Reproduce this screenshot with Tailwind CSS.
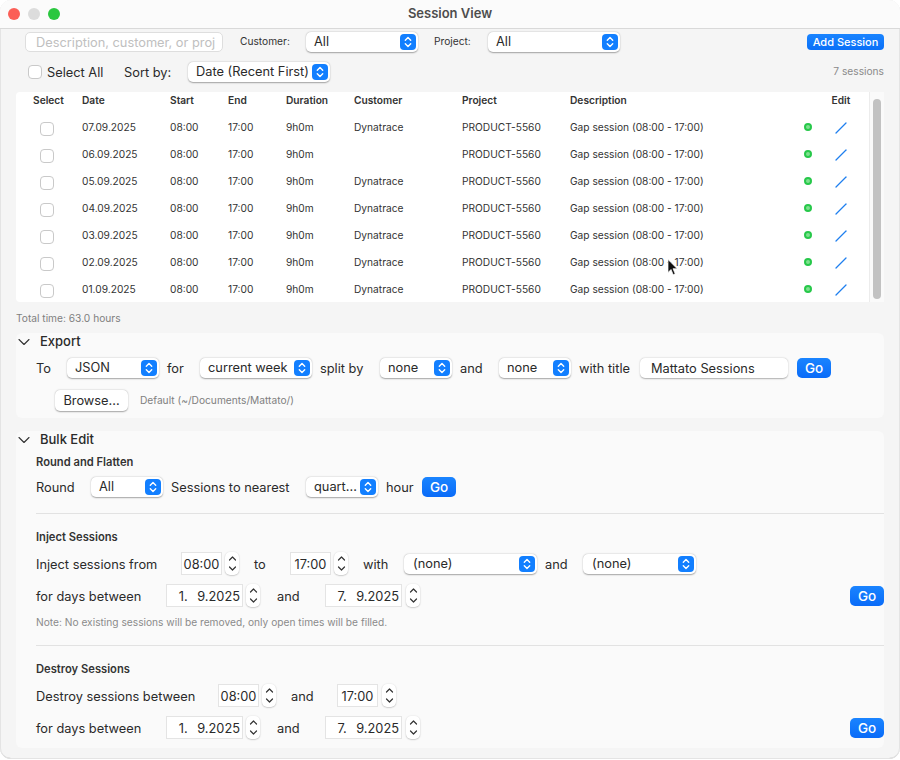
<!DOCTYPE html>
<html lang="en">
  <head>
    <meta charset="UTF-8" />
    <title>Session View</title>
    <script src="https://cdn.jsdelivr.net/npm/@tailwindcss/browser@4"></script>
  </head>
  <body class="bg-white font-['Inter',sans-serif] text-[12.8px] text-[#2a2a2a]">
    <div class="relative w-[900px] h-[759px] overflow-hidden rounded-[11px] border-b border-[#cfcfcf] bg-[#f5f5f5] outline outline-[#e4e4e4] -outline-offset-1">
      <!-- Title bar -->
      <header class="relative flex h-[29px] items-center justify-center border-b border-[#d9d9d9] bg-[#fbfbfb]">
        <div class="absolute left-[8px] top-[8px] flex gap-[8px]">
          <span class="size-3 rounded-full bg-[#fb5f57]"></span>
          <span class="size-3 rounded-full bg-[#dcdcdc]"></span>
          <span class="size-3 rounded-full bg-[#2ac73f]"></span>
        </div>
        <h1 class="text-[13px] font-semibold text-[#4d4d4d]">Session View</h1>
      </header>

      <!-- Filters -->
      <div class="flex h-[20px] mt-[3px] items-center pl-[25px] pr-[16px]">
        <div class="w-[198px] h-[20px] rounded-[5px] border border-[#dedede] bg-white pl-[10px] leading-[19px] text-[#c0c0c0] overflow-hidden whitespace-nowrap">Description, customer, or proj</div>
        <span class="ml-[17px] w-[66px] text-[10.2px] text-[#333]">Customer:</span>
        <div class="w-[112px] h-[20px] rounded-[5px] bg-white shadow-[0_0.5px_1.5px_rgba(0,0,0,0.35)] flex items-center justify-between pl-[8px] pr-[2px]"><span>All</span>
          <span class="size-4 rounded-[4px] bg-[#127fff] flex items-center justify-center"><svg class="w-[10px] h-[14px]" viewBox="0 0 10 14" fill="none" stroke="white" stroke-width="1.4" stroke-linecap="round" stroke-linejoin="round"><path d="M2.3 5.3 5 2.6l2.7 2.7M2.3 8.7 5 11.4l2.7-2.7"/></svg></span>
        </div>
        <span class="ml-[16px] w-[54px] text-[10.2px] text-[#333]">Project:</span>
        <div class="w-[132px] h-[20px] rounded-[5px] bg-white shadow-[0_0.5px_1.5px_rgba(0,0,0,0.35)] flex items-center justify-between pl-[8px] pr-[2px]"><span>All</span>
          <span class="size-4 rounded-[4px] bg-[#127fff] flex items-center justify-center"><svg class="w-[10px] h-[14px]" viewBox="0 0 10 14" fill="none" stroke="white" stroke-width="1.4" stroke-linecap="round" stroke-linejoin="round"><path d="M2.3 5.3 5 2.6l2.7 2.7M2.3 8.7 5 11.4l2.7-2.7"/></svg></span>
        </div>
        <button class="ml-auto w-[77px] h-[16px] rounded-[4px] bg-linear-to-b from-[#1a84ff] to-[#0a70f8] text-[11px] font-medium leading-[16px] text-white">Add Session</button>
      </div>

      <div class="flex h-[20px] mt-[10px] items-center pl-[28px] pr-[16px]">
        <span class="size-[14px] rounded-[4px] border border-[#c9c9c9] bg-white"></span>
        <span class="ml-[5px] w-[77px] pt-[2px]">Select All</span>
        <span class="w-[64px] pt-[2px]">Sort by:</span>
        <div class="w-[142px] h-[20px] rounded-[5px] bg-white shadow-[0_0.5px_1.5px_rgba(0,0,0,0.35)] flex items-center justify-between pl-[8px] pr-[2px]"><span class="whitespace-nowrap">Date (Recent First)</span>
          <span class="size-4 rounded-[4px] bg-[#127fff] flex items-center justify-center"><svg class="w-[10px] h-[14px]" viewBox="0 0 10 14" fill="none" stroke="white" stroke-width="1.4" stroke-linecap="round" stroke-linejoin="round"><path d="M2.3 5.3 5 2.6l2.7 2.7M2.3 8.7 5 11.4l2.7-2.7"/></svg></span>
        </div>
        <span class="ml-auto text-[10.2px] text-[#8a8a8a]">7 sessions</span>
      </div>

      <!-- Table -->
      <div class="mx-[16px] mt-[10px] flex h-[210px] rounded-[4px] bg-white text-[10.2px] text-[#333]">
        <div class="w-[853px]">
          <div class="grid h-[17px] grid-cols-[66px_88px_58px_58px_68px_108px_108px_232px_22px_34px] items-center font-semibold">
            <span class="pl-[17px]">Select</span><span>Date</span><span>Start</span><span>End</span><span>Duration</span><span>Customer</span><span>Project</span><span>Description</span><span></span><span class="text-center">Edit</span>
          </div>
          <div class="mt-[5px] grid h-[27px] grid-cols-[66px_88px_58px_58px_68px_108px_108px_232px_22px_34px] items-center">
            <span class="ml-[24px] mt-[2px] size-[14px] rounded-[4px] border border-[#c9c9c9] bg-white"></span><span>07.09.2025</span><span>08:00</span><span>17:00</span><span>9h0m</span><span>Dynatrace</span><span>PRODUCT-5560</span><span>Gap session (08:00 - 17:00)</span><span class="ml-[2px] mb-[1px] size-2 rounded-full border-[2px] border-[#27c84a] bg-[#7fe08f]"></span>
            <svg class="mx-auto size-3" viewBox="0 0 12 12" fill="none" stroke="#1f7fef" stroke-width="1.3" stroke-linecap="round"><path d="M1 11 11 1"/></svg>
          </div>
          <div class="grid h-[27px] grid-cols-[66px_88px_58px_58px_68px_108px_108px_232px_22px_34px] items-center">
            <span class="ml-[24px] mt-[2px] size-[14px] rounded-[4px] border border-[#c9c9c9] bg-white"></span><span>06.09.2025</span><span>08:00</span><span>17:00</span><span>9h0m</span><span></span><span>PRODUCT-5560</span><span>Gap session (08:00 - 17:00)</span><span class="ml-[2px] mb-[1px] size-2 rounded-full border-[2px] border-[#27c84a] bg-[#7fe08f]"></span>
            <svg class="mx-auto size-3" viewBox="0 0 12 12" fill="none" stroke="#1f7fef" stroke-width="1.3" stroke-linecap="round"><path d="M1 11 11 1"/></svg>
          </div>
          <div class="grid h-[27px] grid-cols-[66px_88px_58px_58px_68px_108px_108px_232px_22px_34px] items-center">
            <span class="ml-[24px] mt-[2px] size-[14px] rounded-[4px] border border-[#c9c9c9] bg-white"></span><span>05.09.2025</span><span>08:00</span><span>17:00</span><span>9h0m</span><span>Dynatrace</span><span>PRODUCT-5560</span><span>Gap session (08:00 - 17:00)</span><span class="ml-[2px] mb-[1px] size-2 rounded-full border-[2px] border-[#27c84a] bg-[#7fe08f]"></span>
            <svg class="mx-auto size-3" viewBox="0 0 12 12" fill="none" stroke="#1f7fef" stroke-width="1.3" stroke-linecap="round"><path d="M1 11 11 1"/></svg>
          </div>
          <div class="grid h-[27px] grid-cols-[66px_88px_58px_58px_68px_108px_108px_232px_22px_34px] items-center">
            <span class="ml-[24px] mt-[2px] size-[14px] rounded-[4px] border border-[#c9c9c9] bg-white"></span><span>04.09.2025</span><span>08:00</span><span>17:00</span><span>9h0m</span><span>Dynatrace</span><span>PRODUCT-5560</span><span>Gap session (08:00 - 17:00)</span><span class="ml-[2px] mb-[1px] size-2 rounded-full border-[2px] border-[#27c84a] bg-[#7fe08f]"></span>
            <svg class="mx-auto size-3" viewBox="0 0 12 12" fill="none" stroke="#1f7fef" stroke-width="1.3" stroke-linecap="round"><path d="M1 11 11 1"/></svg>
          </div>
          <div class="grid h-[27px] grid-cols-[66px_88px_58px_58px_68px_108px_108px_232px_22px_34px] items-center">
            <span class="ml-[24px] mt-[2px] size-[14px] rounded-[4px] border border-[#c9c9c9] bg-white"></span><span>03.09.2025</span><span>08:00</span><span>17:00</span><span>9h0m</span><span>Dynatrace</span><span>PRODUCT-5560</span><span>Gap session (08:00 - 17:00)</span><span class="ml-[2px] mb-[1px] size-2 rounded-full border-[2px] border-[#27c84a] bg-[#7fe08f]"></span>
            <svg class="mx-auto size-3" viewBox="0 0 12 12" fill="none" stroke="#1f7fef" stroke-width="1.3" stroke-linecap="round"><path d="M1 11 11 1"/></svg>
          </div>
          <div class="grid h-[27px] grid-cols-[66px_88px_58px_58px_68px_108px_108px_232px_22px_34px] items-center">
            <span class="ml-[24px] mt-[2px] size-[14px] rounded-[4px] border border-[#c9c9c9] bg-white"></span><span>02.09.2025</span><span>08:00</span><span>17:00</span><span>9h0m</span><span>Dynatrace</span><span>PRODUCT-5560</span><span>Gap session (08:00 - 17:00)</span><span class="ml-[2px] mb-[1px] size-2 rounded-full border-[2px] border-[#27c84a] bg-[#7fe08f]"></span>
            <svg class="mx-auto size-3" viewBox="0 0 12 12" fill="none" stroke="#1f7fef" stroke-width="1.3" stroke-linecap="round"><path d="M1 11 11 1"/></svg>
          </div>
          <div class="grid h-[27px] grid-cols-[66px_88px_58px_58px_68px_108px_108px_232px_22px_34px] items-center">
            <span class="ml-[24px] mt-[2px] size-[14px] rounded-[4px] border border-[#c9c9c9] bg-white"></span><span>01.09.2025</span><span>08:00</span><span>17:00</span><span>9h0m</span><span>Dynatrace</span><span>PRODUCT-5560</span><span>Gap session (08:00 - 17:00)</span><span class="ml-[2px] mb-[1px] size-2 rounded-full border-[2px] border-[#27c84a] bg-[#7fe08f]"></span>
            <svg class="mx-auto size-3" viewBox="0 0 12 12" fill="none" stroke="#1f7fef" stroke-width="1.3" stroke-linecap="round"><path d="M1 11 11 1"/></svg>
          </div>
        </div>
        <div class="w-[15px] border-l border-[#ececec] bg-[#fafafa] pl-[3px] pt-[7px]">
          <div class="h-[200px] w-[8px] rounded-full bg-[#c2c2c2]"></div>
        </div>
      </div>

      <p class="ml-[16px] mt-[10px] h-[12px] text-[10.2px] leading-[12px] text-[#808080]">Total time: 63.0 hours</p>

      <!-- Export -->
      <section class="mx-[16px] mt-[9px] h-[85px] rounded-[6px] bg-[#fafafa]">
        <div class="flex h-[17px] items-center pt-[1px]">
          <svg class="ml-[2px] w-[12px] h-[8px]" viewBox="0 0 12 8" fill="none" stroke="#333" stroke-width="1.1" stroke-linecap="round" stroke-linejoin="round"><path d="M1 1.5 6 6.5l5-5"/></svg>
          <span class="ml-[10px] text-[13px] font-medium">Export</span>
        </div>
        <div class="mt-[8px] flex h-[20px] items-center pl-[20px]">
          <span class="w-[31px] pt-[2px]">To</span>
          <div class="w-[92px] h-[20px] rounded-[5px] bg-white shadow-[0_0.5px_1.5px_rgba(0,0,0,0.35)] flex items-center justify-between pl-[8px] pr-[2px]"><span>JSON</span>
            <span class="size-4 rounded-[4px] bg-[#127fff] flex items-center justify-center"><svg class="w-[10px] h-[14px]" viewBox="0 0 10 14" fill="none" stroke="white" stroke-width="1.4" stroke-linecap="round" stroke-linejoin="round"><path d="M2.3 5.3 5 2.6l2.7 2.7M2.3 8.7 5 11.4l2.7-2.7"/></svg></span>
          </div>
          <span class="ml-[8px] w-[33px] pt-[2px]">for</span>
          <div class="w-[112px] h-[20px] rounded-[5px] bg-white shadow-[0_0.5px_1.5px_rgba(0,0,0,0.35)] flex items-center justify-between pl-[8px] pr-[2px]"><span class="whitespace-nowrap">current week</span>
            <span class="size-4 rounded-[4px] bg-[#127fff] flex items-center justify-center"><svg class="w-[10px] h-[14px]" viewBox="0 0 10 14" fill="none" stroke="white" stroke-width="1.4" stroke-linecap="round" stroke-linejoin="round"><path d="M2.3 5.3 5 2.6l2.7 2.7M2.3 8.7 5 11.4l2.7-2.7"/></svg></span>
          </div>
          <span class="ml-[8px] w-[60px] pt-[2px] whitespace-nowrap">split by</span>
          <div class="w-[72px] h-[20px] rounded-[5px] bg-white shadow-[0_0.5px_1.5px_rgba(0,0,0,0.35)] flex items-center justify-between pl-[8px] pr-[2px]"><span>none</span>
            <span class="size-4 rounded-[4px] bg-[#127fff] flex items-center justify-center"><svg class="w-[10px] h-[14px]" viewBox="0 0 10 14" fill="none" stroke="white" stroke-width="1.4" stroke-linecap="round" stroke-linejoin="round"><path d="M2.3 5.3 5 2.6l2.7 2.7M2.3 8.7 5 11.4l2.7-2.7"/></svg></span>
          </div>
          <span class="ml-[8px] w-[39px] pt-[2px]">and</span>
          <div class="w-[72px] h-[20px] rounded-[5px] bg-white shadow-[0_0.5px_1.5px_rgba(0,0,0,0.35)] flex items-center justify-between pl-[8px] pr-[2px]"><span>none</span>
            <span class="size-4 rounded-[4px] bg-[#127fff] flex items-center justify-center"><svg class="w-[10px] h-[14px]" viewBox="0 0 10 14" fill="none" stroke="white" stroke-width="1.4" stroke-linecap="round" stroke-linejoin="round"><path d="M2.3 5.3 5 2.6l2.7 2.7M2.3 8.7 5 11.4l2.7-2.7"/></svg></span>
          </div>
          <span class="ml-[8px] w-[61px] pt-[2px] whitespace-nowrap">with title</span>
          <div class="w-[148px] h-[20px] rounded-[5px] bg-white shadow-[0_0.5px_1.5px_rgba(0,0,0,0.3)] pl-[11px] leading-[21px]">Mattato Sessions</div>
          <button class="ml-[9px] w-[34px] h-[20px] rounded-[5px] bg-linear-to-b from-[#1a84ff] to-[#0a6bf8] text-[13.5px] font-medium text-white">Go</button>
        </div>
        <div class="mt-[12px] flex h-[21px] items-center pl-[39px]">
          <button class="h-[21px] w-[73px] rounded-[5px] bg-white shadow-[0_0.5px_1.5px_rgba(0,0,0,0.35)]">Browse...</button>
          <span class="ml-[12px] text-[10.2px] text-[#808080]">Default (~/Documents/Mattato/)</span>
        </div>
      </section>

      <!-- Bulk Edit -->
      <section class="mx-[16px] mt-[13px] h-[317px] rounded-[6px] bg-[#fafafa]">
        <div class="flex h-[17px] items-center pt-[1px]">
          <svg class="ml-[2px] w-[12px] h-[8px]" viewBox="0 0 12 8" fill="none" stroke="#333" stroke-width="1.1" stroke-linecap="round" stroke-linejoin="round"><path d="M1 1.5 6 6.5l5-5"/></svg>
          <span class="ml-[10px] text-[13px] font-medium">Bulk Edit</span>
        </div>

        <div class="pl-[20px]">
          <h2 class="mt-[8px] h-[12px] text-[11.2px] font-semibold leading-[12px] text-[#333]">Round and Flatten</h2>
          <div class="mt-[9px] flex h-[20px] items-center">
            <span class="w-[55px] pt-[2px]">Round</span>
            <div class="w-[72px] h-[20px] rounded-[5px] bg-white shadow-[0_0.5px_1.5px_rgba(0,0,0,0.35)] flex items-center justify-between pl-[8px] pr-[2px]"><span>All</span>
              <span class="size-4 rounded-[4px] bg-[#127fff] flex items-center justify-center"><svg class="w-[10px] h-[14px]" viewBox="0 0 10 14" fill="none" stroke="white" stroke-width="1.4" stroke-linecap="round" stroke-linejoin="round"><path d="M2.3 5.3 5 2.6l2.7 2.7M2.3 8.7 5 11.4l2.7-2.7"/></svg></span>
            </div>
            <span class="ml-[8px] w-[135px] pt-[2px] whitespace-nowrap">Sessions to nearest</span>
            <div class="w-[72px] h-[20px] rounded-[5px] bg-white shadow-[0_0.5px_1.5px_rgba(0,0,0,0.35)] flex items-center justify-between pl-[8px] pr-[2px]"><span>quart...</span>
              <span class="size-4 rounded-[4px] bg-[#127fff] flex items-center justify-center"><svg class="w-[10px] h-[14px]" viewBox="0 0 10 14" fill="none" stroke="white" stroke-width="1.4" stroke-linecap="round" stroke-linejoin="round"><path d="M2.3 5.3 5 2.6l2.7 2.7M2.3 8.7 5 11.4l2.7-2.7"/></svg></span>
            </div>
            <span class="ml-[8px] w-[36px] pt-[2px]">hour</span>
            <button class="w-[34px] h-[20px] rounded-[5px] bg-linear-to-b from-[#1a84ff] to-[#0a6bf8] text-[13.5px] font-medium text-white">Go</button>
          </div>
          <hr class="mt-[16px] border-[#e2e2e2]" />

          <h2 class="mt-[17px] h-[12px] text-[11.2px] font-semibold leading-[12px] text-[#333]">Inject Sessions</h2>
          <div class="mt-[9px] flex h-[23px] items-center">
            <span class="w-[145px] pt-[2px] whitespace-nowrap">Inject sessions from</span>
            <div class="w-[41px] h-[23px] bg-white border border-[#e4e4e4] text-center leading-[23px]">08:00</div>
            <div class="ml-[3px] w-[14px] h-[23px] rounded-[5px] bg-white shadow-[0_0.5px_1.5px_rgba(0,0,0,0.3)] flex items-center justify-center"><svg class="w-[9px] h-[17px]" viewBox="0 0 9 17" fill="none" stroke="#333" stroke-width="1.2" stroke-linecap="round" stroke-linejoin="round"><path d="M1.5 5 4.5 2l3 3M1.5 12l3 3 3-3"/></svg></div>
            <span class="ml-[15px] w-[36px] pt-[2px]">to</span>
            <div class="w-[41px] h-[23px] bg-white border border-[#e4e4e4] text-center leading-[23px]">17:00</div>
            <div class="ml-[3px] w-[14px] h-[23px] rounded-[5px] bg-white shadow-[0_0.5px_1.5px_rgba(0,0,0,0.3)] flex items-center justify-center"><svg class="w-[9px] h-[17px]" viewBox="0 0 9 17" fill="none" stroke="#333" stroke-width="1.2" stroke-linecap="round" stroke-linejoin="round"><path d="M1.5 5 4.5 2l3 3M1.5 12l3 3 3-3"/></svg></div>
            <span class="ml-[15px] w-[41px] pt-[2px]">with</span>
            <div class="w-[133px] h-[20px] rounded-[5px] bg-white shadow-[0_0.5px_1.5px_rgba(0,0,0,0.35)] flex items-center justify-between pl-[9px] pr-[2px]"><span>(none)</span>
              <span class="size-4 rounded-[4px] bg-[#127fff] flex items-center justify-center"><svg class="w-[10px] h-[14px]" viewBox="0 0 10 14" fill="none" stroke="white" stroke-width="1.4" stroke-linecap="round" stroke-linejoin="round"><path d="M2.3 5.3 5 2.6l2.7 2.7M2.3 8.7 5 11.4l2.7-2.7"/></svg></span>
            </div>
            <span class="ml-[8px] w-[38px] pt-[2px]">and</span>
            <div class="w-[113px] h-[20px] rounded-[5px] bg-white shadow-[0_0.5px_1.5px_rgba(0,0,0,0.35)] flex items-center justify-between pl-[9px] pr-[2px]"><span>(none)</span>
              <span class="size-4 rounded-[4px] bg-[#127fff] flex items-center justify-center"><svg class="w-[10px] h-[14px]" viewBox="0 0 10 14" fill="none" stroke="white" stroke-width="1.4" stroke-linecap="round" stroke-linejoin="round"><path d="M2.3 5.3 5 2.6l2.7 2.7M2.3 8.7 5 11.4l2.7-2.7"/></svg></span>
            </div>
          </div>
          <div class="mt-[9px] flex h-[23px] items-center">
            <span class="w-[130px] pt-[2px] whitespace-nowrap">for days between</span>
            <div class="w-[77px] h-[23px] bg-white border border-[#e4e4e4] pr-[2px] text-right leading-[23px] whitespace-pre">1.&thinsp;  9.2025</div>
            <div class="ml-[3px] w-[14px] h-[23px] rounded-[5px] bg-white shadow-[0_0.5px_1.5px_rgba(0,0,0,0.3)] flex items-center justify-center"><svg class="w-[9px] h-[17px]" viewBox="0 0 9 17" fill="none" stroke="#333" stroke-width="1.2" stroke-linecap="round" stroke-linejoin="round"><path d="M1.5 5 4.5 2l3 3M1.5 12l3 3 3-3"/></svg></div>
            <span class="ml-[17px] w-[48px] pt-[2px]">and</span>
            <div class="w-[77px] h-[23px] bg-white border border-[#e4e4e4] pr-[2px] text-right leading-[23px] whitespace-pre">7.&thinsp;  9.2025</div>
            <div class="ml-[4px] w-[14px] h-[23px] rounded-[5px] bg-white shadow-[0_0.5px_1.5px_rgba(0,0,0,0.3)] flex items-center justify-center"><svg class="w-[9px] h-[17px]" viewBox="0 0 9 17" fill="none" stroke="#333" stroke-width="1.2" stroke-linecap="round" stroke-linejoin="round"><path d="M1.5 5 4.5 2l3 3M1.5 12l3 3 3-3"/></svg></div>
            <button class="ml-auto w-[34px] h-[20px] rounded-[5px] bg-linear-to-b from-[#1a84ff] to-[#0a6bf8] text-[13.5px] font-medium text-white">Go</button>
          </div>
          <p class="mt-[9px] h-[12px] text-[10.2px] leading-[12px] text-[#8a8a8a]">Note: No existing sessions will be removed, only open times will be filled.</p>
          <hr class="mt-[17px] border-[#e2e2e2]" />

          <h2 class="mt-[17px] h-[12px] text-[11.2px] font-semibold leading-[12px] text-[#333]">Destroy Sessions</h2>
          <div class="mt-[9px] flex h-[23px] items-center">
            <span class="w-[182px] pt-[2px] whitespace-nowrap">Destroy sessions between</span>
            <div class="w-[41px] h-[23px] bg-white border border-[#e4e4e4] text-center leading-[23px]">08:00</div>
            <div class="ml-[3px] w-[14px] h-[23px] rounded-[5px] bg-white shadow-[0_0.5px_1.5px_rgba(0,0,0,0.3)] flex items-center justify-center"><svg class="w-[9px] h-[17px]" viewBox="0 0 9 17" fill="none" stroke="#333" stroke-width="1.2" stroke-linecap="round" stroke-linejoin="round"><path d="M1.5 5 4.5 2l3 3M1.5 12l3 3 3-3"/></svg></div>
            <span class="ml-[15px] w-[46px] pt-[2px]">and</span>
            <div class="w-[41px] h-[23px] bg-white border border-[#e4e4e4] text-center leading-[23px]">17:00</div>
            <div class="ml-[4px] w-[14px] h-[23px] rounded-[5px] bg-white shadow-[0_0.5px_1.5px_rgba(0,0,0,0.3)] flex items-center justify-center"><svg class="w-[9px] h-[17px]" viewBox="0 0 9 17" fill="none" stroke="#333" stroke-width="1.2" stroke-linecap="round" stroke-linejoin="round"><path d="M1.5 5 4.5 2l3 3M1.5 12l3 3 3-3"/></svg></div>
          </div>
          <div class="mt-[9px] flex h-[23px] items-center">
            <span class="w-[130px] pt-[2px] whitespace-nowrap">for days between</span>
            <div class="w-[77px] h-[23px] bg-white border border-[#e4e4e4] pr-[2px] text-right leading-[23px] whitespace-pre">1.&thinsp;  9.2025</div>
            <div class="ml-[3px] w-[14px] h-[23px] rounded-[5px] bg-white shadow-[0_0.5px_1.5px_rgba(0,0,0,0.3)] flex items-center justify-center"><svg class="w-[9px] h-[17px]" viewBox="0 0 9 17" fill="none" stroke="#333" stroke-width="1.2" stroke-linecap="round" stroke-linejoin="round"><path d="M1.5 5 4.5 2l3 3M1.5 12l3 3 3-3"/></svg></div>
            <span class="ml-[17px] w-[48px] pt-[2px]">and</span>
            <div class="w-[77px] h-[23px] bg-white border border-[#e4e4e4] pr-[2px] text-right leading-[23px] whitespace-pre">7.&thinsp;  9.2025</div>
            <div class="ml-[4px] w-[14px] h-[23px] rounded-[5px] bg-white shadow-[0_0.5px_1.5px_rgba(0,0,0,0.3)] flex items-center justify-center"><svg class="w-[9px] h-[17px]" viewBox="0 0 9 17" fill="none" stroke="#333" stroke-width="1.2" stroke-linecap="round" stroke-linejoin="round"><path d="M1.5 5 4.5 2l3 3M1.5 12l3 3 3-3"/></svg></div>
            <button class="ml-auto w-[34px] h-[20px] rounded-[5px] bg-linear-to-b from-[#1a84ff] to-[#0a6bf8] text-[13.5px] font-medium text-white">Go</button>
          </div>
        </div>
      </section>

      <!-- Mouse pointer -->
      <svg class="absolute left-[667px] top-[259px] w-[11px] h-[17px]" viewBox="0 0 11 17"><path d="M1 0.5v13l3-3 2.2 5.2 2-0.9L6 9.7h4.2z" fill="#111" stroke="white" stroke-width="0.7"/></svg>
    </div>
  </body>
</html>
